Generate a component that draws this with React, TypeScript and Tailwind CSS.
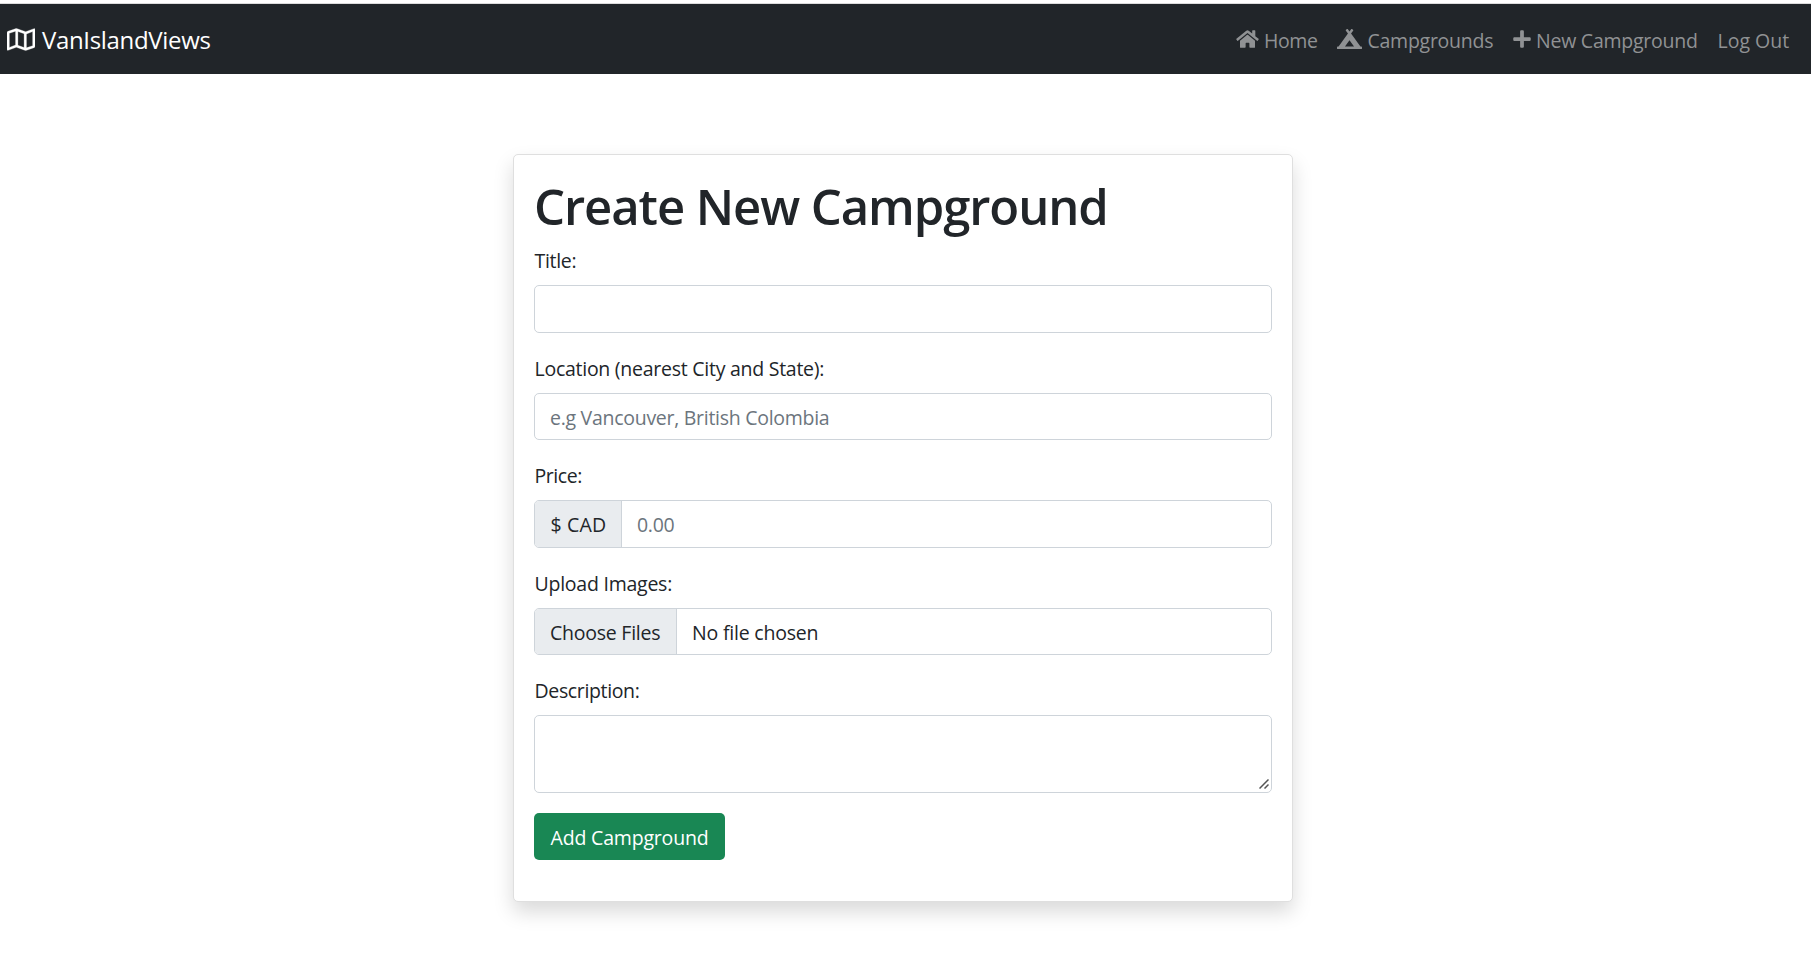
import type { ReactNode } from "react";
import { FaCampground, FaHome, FaPlus, FaRegMap } from "react-icons/fa";

const control = "h-[47.5px] rounded-[5px] border border-[#ced4da] bg-white";

function Field({ label, htmlFor, className, children }: { label: string; htmlFor: string; className: string; children: ReactNode }) {
  return (
    <div className="mb-5 flex flex-col">
      <label htmlFor={htmlFor} className={`mb-[10px] h-[30px] pt-px pl-[0.5px] leading-[30px] ${className}`}>
        {label}
      </label>
      {children}
    </div>
  );
}

function Navbar() {
  return (
    <nav className="mt-[3px] flex h-[71px] items-center justify-between border-t border-[#dcdcdc] bg-[#212529] pr-[21px] pl-[7px]">
      <a href="#" className="flex items-center text-[24px] tracking-[-0.33px] text-white">
        <FaRegMap className="mr-[7px] h-[25px] w-[28px]" strokeWidth="6" />
        <span className="pt-[2px]">VanIslandViews</span>
      </a>
      <div className="flex items-center text-[19.5px] text-[#909294]">
        <a href="#" className="flex w-[101.5px] items-center">
          <FaHome className="mr-[5.5px] h-5 w-[23px]" />
          <span className="pt-[3px] tracking-[-0.4px]">Home</span>
        </a>
        <a href="#" className="flex w-[175.5px] items-center">
          <FaCampground className="mr-[5.5px] h-5 w-[25px]" />
          <span className="pt-[3px] tracking-[-0.26px]">Campgrounds</span>
        </a>
        <a href="#" className="flex w-[205px] items-center">
          <FaPlus className="mr-[5.5px] h-5 w-[18px]" />
          <span className="pt-[3px] tracking-[-0.24px]">New Campground</span>
        </a>
        <a href="#" className="flex w-[72.5px] items-center">
          <span className="pt-[3px]">Log Out</span>
        </a>
      </div>
    </nav>
  );
}

export default function App() {
  return (
    <div className="min-h-[960px] overflow-hidden bg-white font-['Open_Sans','Noto_Sans',sans-serif] text-[19.5px] whitespace-nowrap text-[#212529]">
      <Navbar />
      <main className="mt-[80px] ml-[513px] w-[780px] rounded-[5px] border border-[#dfdfdf] bg-white p-5 shadow-[0_10px_20px_rgba(0,0,0,0.15)]">
        <h1 className="mb-[10px] h-[60px] pt-px text-[49px] leading-[60px] font-semibold tracking-[-1.07px]">
          Create New Campground
        </h1>
        <form onSubmit={(e) => e.preventDefault()}>
          <Field label="Title:" htmlFor="title" className="tracking-[-0.3px]">
            <input id="title" type="text" className={`${control} px-[15px]`} />
          </Field>
          <Field label="Location (nearest City and State):" htmlFor="location" className="tracking-[-0.26px]">
            <input
              id="location"
              type="text"
              placeholder="e.g Vancouver, British Colombia"
              className={`${control} px-[15px] pt-[2px] tracking-[-0.28px] placeholder:text-[#6c757d]`}
            />
          </Field>
          <Field label="Price:" htmlFor="price" className="tracking-[-0.45px]">
            <div className={`${control} flex overflow-hidden`}>
              <span className="flex w-[87px] items-center border-r border-[#ced4da] bg-[#e9ecef] pt-px pl-[15.5px] tracking-[0.15px]">
                $ CAD
              </span>
              <input
                id="price"
                type="text"
                placeholder="0.00"
                className="min-w-0 flex-1 px-[15px] pt-px tracking-[-0.3px] placeholder:text-[#6c757d]"
              />
            </div>
          </Field>
          <Field label="Upload Images:" htmlFor="image" className="tracking-[-0.24px]">
            <label htmlFor="image" className={`${control} flex overflow-hidden`}>
              <span className="flex w-[142px] items-center border-r border-[#ced4da] bg-[#e9ecef] pt-[2px] pl-[15px] tracking-[-0.24px]">
                Choose Files
              </span>
              <span className="flex flex-1 items-center pt-[2px] pl-[15px] tracking-[-0.2px]">No file chosen</span>
              <input id="image" type="file" multiple className="hidden" />
            </label>
          </Field>
          <Field label="Description:" htmlFor="description" className="tracking-[-0.36px]">
            <div className="relative flex h-[78px]">
              <textarea
                id="description"
                className="h-full w-full resize-none rounded-[5px] border border-[#ced4da] bg-white px-[15px] py-[7.5px]"
              />
              <svg viewBox="0 0 10 10" className="absolute right-[3px] bottom-[4px] h-[10px] w-[10px]" stroke="#555" strokeWidth="1.5">
                <path d="M0.5 9.5 9.5 0.5M5.5 9.5 9.5 5.5" />
              </svg>
            </div>
          </Field>
          <button className="mb-[20.5px] block h-[47px] w-[191px] rounded-[5px] bg-[#198754] pt-[2.5px] text-center tracking-[-0.18px] text-white">
            Add Campground
          </button>
        </form>
      </main>
    </div>
  );
}
